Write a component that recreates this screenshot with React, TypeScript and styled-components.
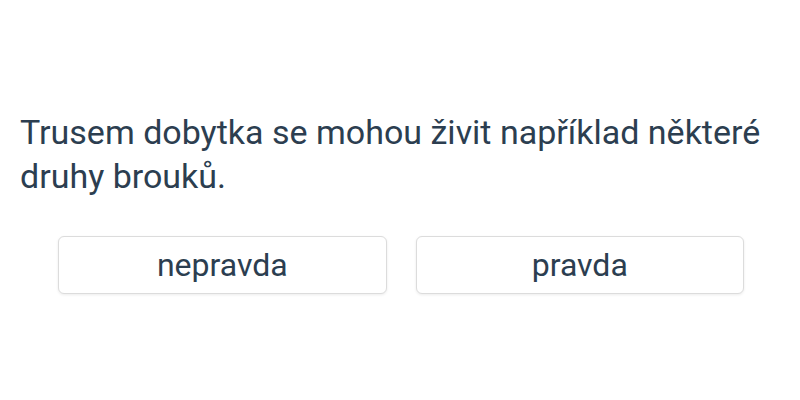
import React from "react";
import styled, { createGlobalStyle } from "styled-components";

const Global = createGlobalStyle`
  html, body { margin: 0; padding: 0; background: #ffffff; }
  body { font-family: Roboto, "Noto Sans", sans-serif; }
`;

const Page = styled.div`
  height: 400px;
  display: flex;
  flex-direction: column;
  justify-content: center;
  box-sizing: border-box;
  padding: 4px 20px 0;
`;

const Question = styled.p`
  margin: 0;
  font-size: 34px;
  line-height: 44px;
  color: #2c3e50;
  font-weight: 400;
`;

const Answers = styled.div`
  margin-top: 38px;
  display: grid;
  grid-template-columns: 1fr 1fr;
  gap: 29px;
  padding: 0 36px 0 38px;
`;

const Answer = styled.button`
  height: 58px;
  background: #ffffff;
  border: 1px solid #dcdcdc;
  border-radius: 6px;
  box-shadow: 0 1px 3px rgba(0, 0, 0, 0.08);
  font-family: Roboto, "Noto Sans", sans-serif;
  font-size: 32px;
  color: #2c3e50;
  cursor: pointer;
  padding: 0;
`;

export default function App() {
  return (
    <>
      <Global />
      <Page>
        <Question>
          Trusem dobytka se mohou živit například některé druhy brouků.
        </Question>
        <Answers>
          <Answer>nepravda</Answer>
          <Answer>pravda</Answer>
        </Answers>
      </Page>
    </>
  );
}
